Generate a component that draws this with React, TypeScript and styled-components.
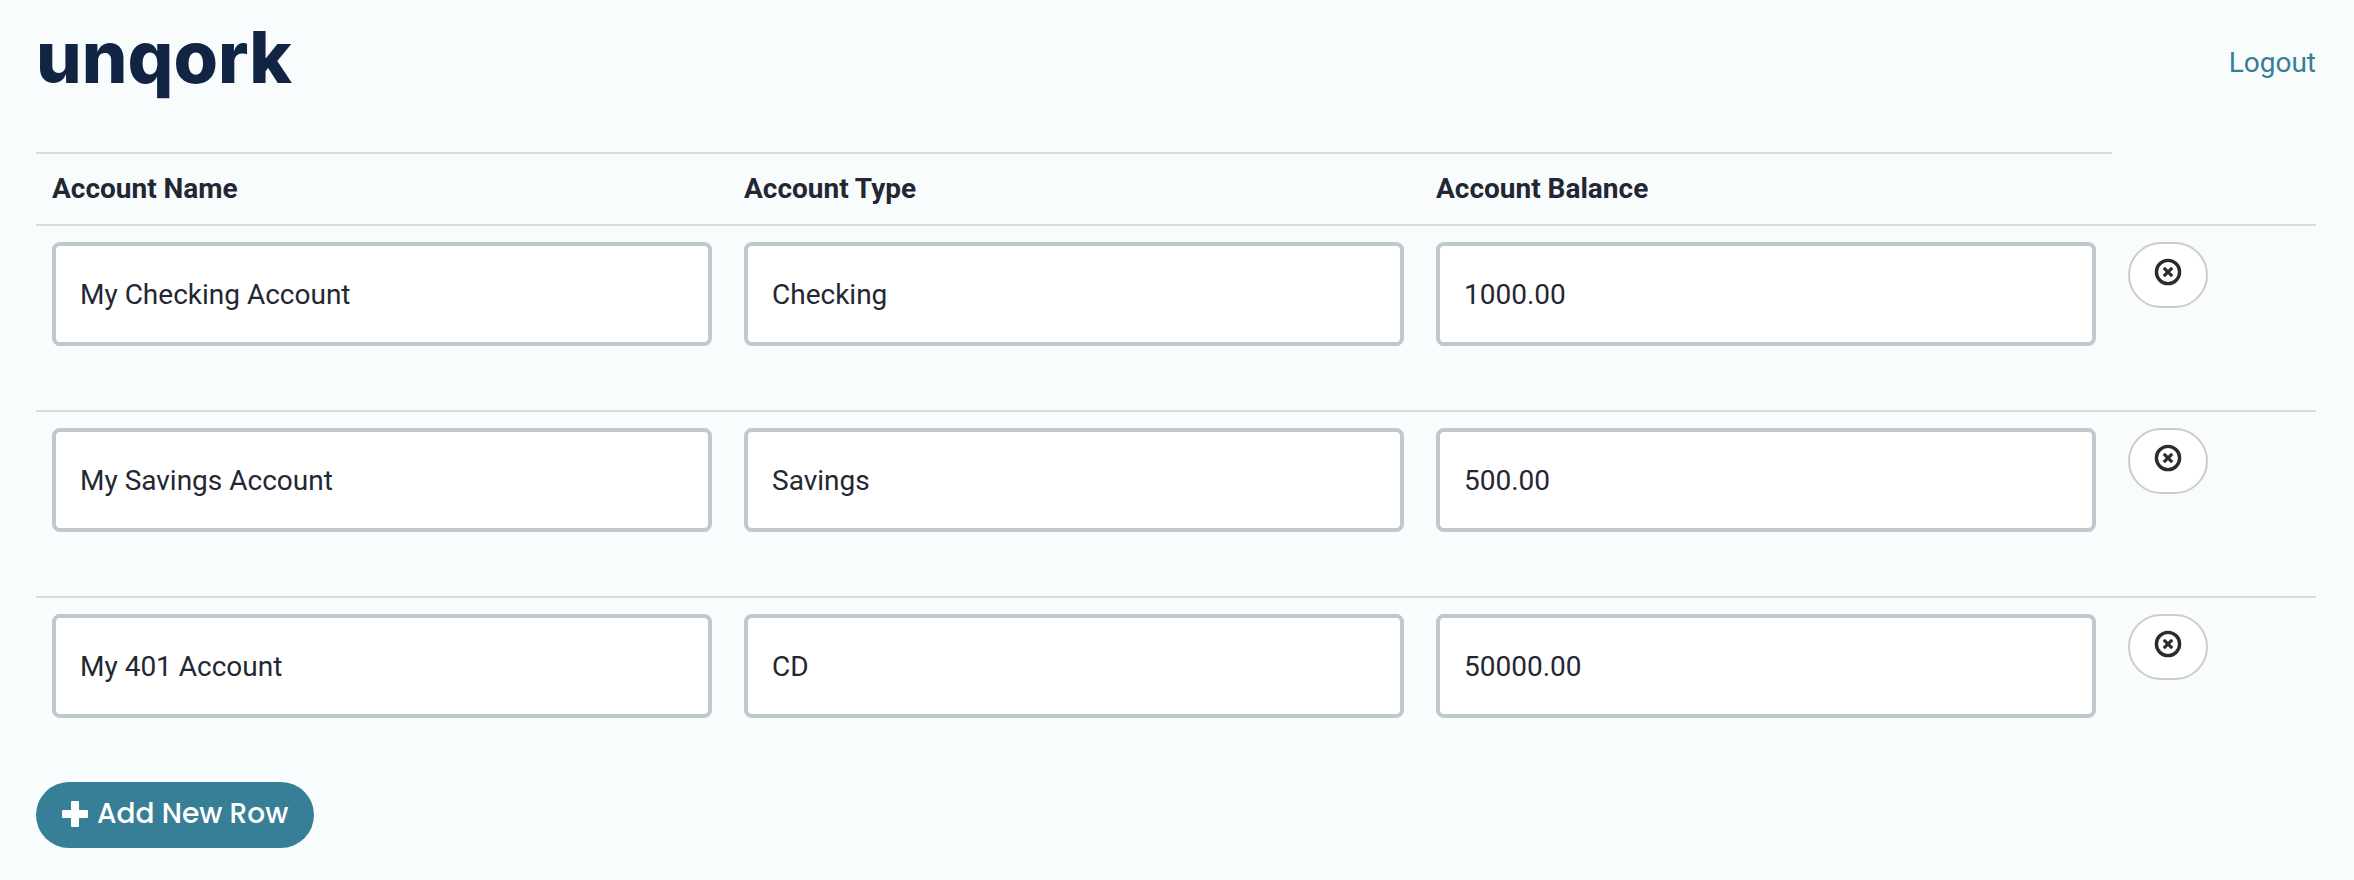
import React, { useState } from "react";
import styled, { createGlobalStyle } from "styled-components";

const colors = {
  page: "#f9fcfd",
  navy: "#112443",
  text: "#232733",
  teal: "#367f96",
  rule: "#d9dcde",
  field: "#c0c7cd",
};

const GlobalStyle = createGlobalStyle`
  *, *::before, *::after { box-sizing: border-box; }
  body {
    margin: 0;
    background: ${colors.page};
    color: ${colors.text};
    font-family: Roboto, "Liberation Sans", sans-serif;
    font-size: 28px;
    line-height: 40px;
  }
`;

const Page = styled.div`
  padding: 16px 38px 32px 36px;
`;

const Header = styled.header`
  display: flex;
  align-items: flex-start;
  justify-content: space-between;
  height: 94px;
  margin-bottom: 42px;
`;

const Logo = styled.div`
  color: ${colors.navy};
  font-family: Inter, sans-serif;
  font-size: 72px;
  font-weight: 800;
  line-height: 82px;
`;

const LogoutLink = styled.a`
  align-self: center;
  color: ${colors.teal};
  text-decoration: none;
`;

const AccountTable = styled.table`
  width: 100%;
  table-layout: fixed;
  border-collapse: separate;
  border-spacing: 0;
`;

const ActionColumn = styled.col`
  width: 204px;
`;

const HeadCell = styled.th`
  height: 72px;
  padding: 0 16px;
  border-top: 2px solid ${colors.rule};
  text-align: left;
  font-weight: 700;
`;

const EmptyCell = styled.td`
  padding: 0;
`;

const Cell = styled.td`
  height: 186px;
  padding: 16px;
  border-top: 2px solid ${colors.rule};
  vertical-align: top;
`;

const Field = styled.input`
  display: block;
  width: 100%;
  height: 104px;
  padding: 0 24px;
  border: 4px solid ${colors.field};
  border-radius: 8px;
  background: #fff;
  color: inherit;
  font: inherit;
`;

const PillButton = styled.button<{ $primary?: boolean }>`
  display: flex;
  align-items: center;
  justify-content: center;
  height: 66px;
  border-radius: 33px;
  cursor: pointer;
  color: ${(p) => (p.$primary ? "#fff" : "#292b2f")};
  background: ${(p) => (p.$primary ? colors.teal : "#fff")};
  border: ${(p) => (p.$primary ? "0" : "2px solid #cccccc")};
  padding: ${(p) => (p.$primary ? "0 26px 2px" : "0 24px 6px")};
  gap: 9px;
  font-family: Poppins, Inter, sans-serif;
  font-size: 28px;
  font-weight: 500;
  line-height: 40px;
`;

const RemoveIcon = () => (
  <svg width="28" height="28" viewBox="0 0 28 28" fill="none" stroke="currentColor" aria-hidden="true">
    <circle cx="14" cy="14" r="11.6" strokeWidth="3.4" />
    <path d="M9.8 9.8L18.2 18.2M18.2 9.8L9.8 18.2" strokeWidth="3.1" />
  </svg>
);

const PlusIcon = () => (
  <svg width="26" height="26" viewBox="0 0 26 26" fill="currentColor" aria-hidden="true">
    <rect x="9" y="0" width="8" height="26" rx="1" />
    <rect x="0" y="9" width="26" height="8" rx="1" />
  </svg>
);

type Account = { id: number; values: string[] };

const columns = ["Account Name", "Account Type", "Account Balance"];

const initialAccounts: Account[] = [
  { id: 1, values: ["My Checking Account", "Checking", "1000.00"] },
  { id: 2, values: ["My Savings Account", "Savings", "500.00"] },
  { id: 3, values: ["My 401 Account", "CD", "50000.00"] },
];

export default function App() {
  const [accounts, setAccounts] = useState(initialAccounts);

  const update = (id: number, index: number, value: string) =>
    setAccounts((rows) =>
      rows.map((row) =>
        row.id === id ? { ...row, values: row.values.map((v, i) => (i === index ? value : v)) } : row
      )
    );

  const remove = (id: number) => setAccounts((rows) => rows.filter((row) => row.id !== id));

  const add = () =>
    setAccounts((rows) => [...rows, { id: Math.max(0, ...rows.map((r) => r.id)) + 1, values: ["", "", ""] }]);

  return (
    <>
      <GlobalStyle />
      <Page>
        <Header>
          <Logo>unqork</Logo>
          <LogoutLink href="#logout">Logout</LogoutLink>
        </Header>
        <main>
          <AccountTable>
            <colgroup>
              {columns.map((name) => (
                <col key={name} />
              ))}
              <ActionColumn />
            </colgroup>
            <thead>
              <tr>
                {columns.map((name) => (
                  <HeadCell key={name} scope="col">
                    {name}
                  </HeadCell>
                ))}
                <EmptyCell />
              </tr>
            </thead>
            <tbody>
              {accounts.map((account) => (
                <tr key={account.id}>
                  {columns.map((name, index) => (
                    <Cell key={name}>
                      <Field
                        type="text"
                        aria-label={name}
                        value={account.values[index]}
                        onChange={(e) => update(account.id, index, e.target.value)}
                      />
                    </Cell>
                  ))}
                  <Cell>
                    <PillButton type="button" aria-label="Remove row" onClick={() => remove(account.id)}>
                      <RemoveIcon />
                    </PillButton>
                  </Cell>
                </tr>
              ))}
            </tbody>
          </AccountTable>
          <PillButton type="button" $primary onClick={add}>
            <PlusIcon />
            Add New Row
          </PillButton>
        </main>
      </Page>
    </>
  );
}
